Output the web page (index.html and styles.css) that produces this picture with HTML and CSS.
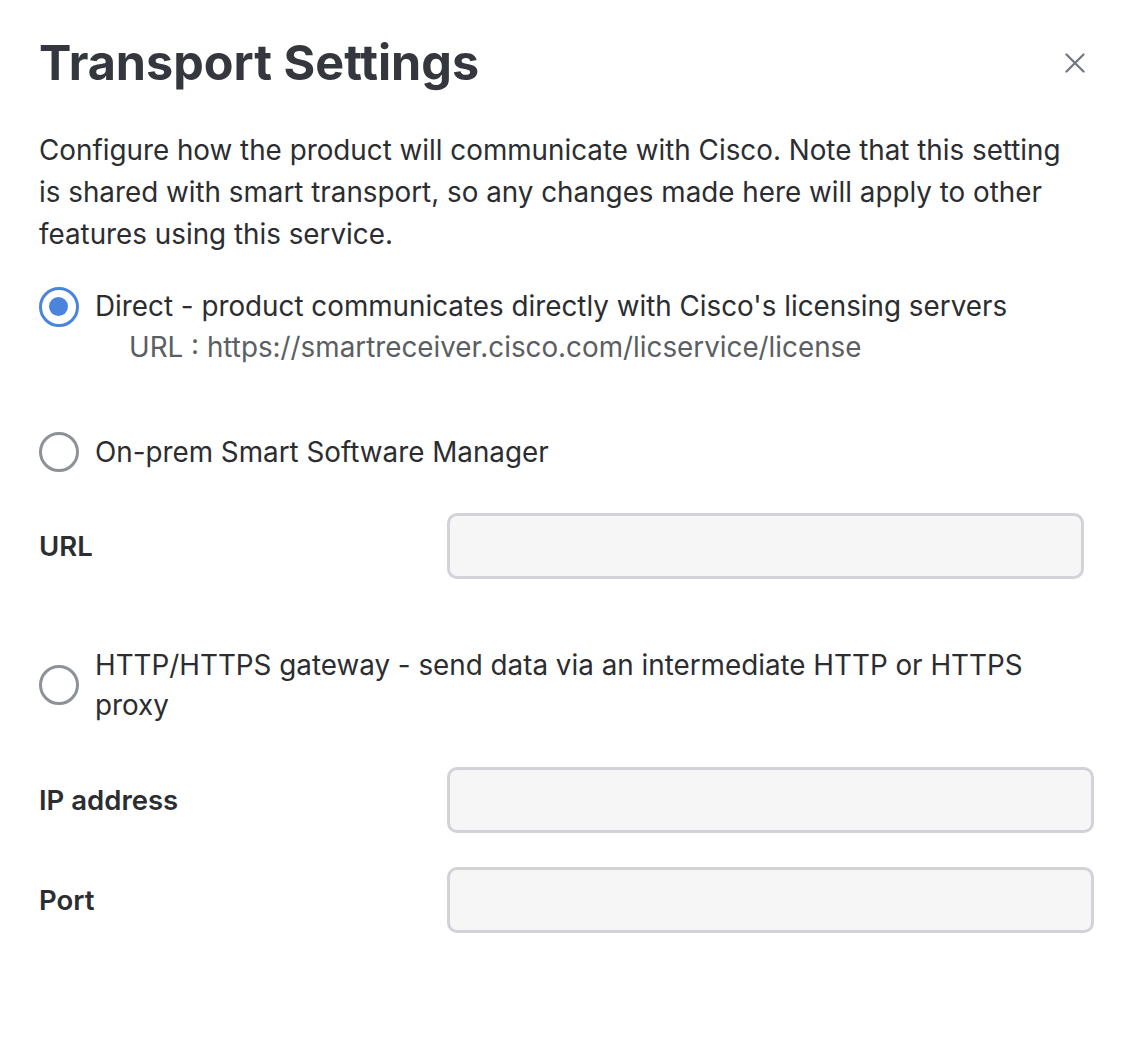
FILE: index.html
```html
<!DOCTYPE html>
<html>
<head>
<meta charset="utf-8">
<link rel="stylesheet" href="styles.css">
</head>
<body>
<div class="dialog">
  <div class="header">
    <h1 class="title">Transport Settings</h1>
    <button class="close" aria-label="Close">
      <svg width="20" height="20" viewBox="0 0 20 20"><path d="M1.5 1.5 L18.5 18.5 M18.5 1.5 L1.5 18.5" stroke="#73777f" stroke-width="2.3" stroke-linecap="round"/></svg>
    </button>
  </div>
  <p class="desc">Configure how the product will communicate with Cisco. Note that this setting is shared with smart transport, so any changes made here will apply to other features using this service.</p>

  <div class="option opt-direct">
    <span class="radio checked"></span>
    <div class="opt-text">
      <div class="opt-label">Direct - product communicates directly with Cisco's licensing servers</div>
      <div class="opt-sub">URL : https://smartreceiver.cisco.com/licservice/license</div>
    </div>
  </div>

  <div class="option opt-onprem">
    <span class="radio"></span>
    <div class="opt-text">
      <div class="opt-label">On-prem Smart Software Manager</div>
    </div>
  </div>

  <div class="field field-url">
    <label class="field-label">URL</label>
    <div class="input input-short"></div>
  </div>

  <div class="option opt-gateway">
    <span class="radio"></span>
    <div class="opt-text">
      <div class="opt-label">HTTP/HTTPS gateway - send data via an intermediate HTTP or HTTPS proxy</div>
    </div>
  </div>

  <div class="field field-ip">
    <label class="field-label">IP address</label>
    <div class="input"></div>
  </div>
  <div class="field field-port">
    <label class="field-label">Port</label>
    <div class="input"></div>
  </div>
</div>
</body>
</html>
```

FILE: styles.css
```css
* { box-sizing: border-box; }
html, body { margin: 0; padding: 0; background: #ffffff; }
body { font-family: Inter, "Noto Sans", sans-serif; color: #2b2d31; }

.dialog { padding: 31px 36px 0 39px; width: 1130px; }

.header { display: flex; justify-content: space-between; align-items: flex-start; }
.title { margin: 0; font-size: 48.5px; font-weight: 700; color: #34373d; line-height: 64px; }
.close { border: 0; background: none; padding: 0; margin-top: 22px; margin-right: 9px; width: 20px; height: 20px; display: block; }
.close svg { display: block; }

.desc { margin: 34px 0 0 0; font-size: 27.8px; line-height: 42px; max-width: 1050px; color: #2b2d31; }

.option { display: flex; align-items: flex-start; gap: 16px; }
.radio { flex: none; width: 40px; height: 40px; border-radius: 50%; border: 3.5px solid #8d9299; background: #fff; position: relative; }
.radio.checked { border-color: #4a84dd; }
.radio.checked::after { content: ""; position: absolute; left: 7px; top: 7px; width: 19px; height: 19px; border-radius: 50%; background: #4a84dd; }

.opt-text { font-size: 27.8px; line-height: 40px; }
.opt-label { color: #2b2d31; }
.opt-sub { color: #5b5e63; padding-left: 34px; }

.opt-direct { margin-top: 31px; }
.opt-direct .opt-text { line-height: 41px; }
.opt-direct .radio { margin-top: 0.5px; }
.opt-onprem { margin-top: 64px; }
.opt-gateway { margin-top: 66px; align-items: center; }
.opt-gateway .opt-text { max-width: 950px; }

.field { display: flex; align-items: center; }
.field-label { flex: none; width: 408px; font-size: 27.5px; font-weight: 600; color: #2b2d31; }
.input { flex: none; width: 647px; height: 66px; border: 3px solid #d1d3d8; border-radius: 10px; background: #f6f6f7; }
.input-short { width: 637px; }
.field-url { margin-top: 41px; }
.field-ip { margin-top: 42px; }
.field-port { margin-top: 34px; }
```
